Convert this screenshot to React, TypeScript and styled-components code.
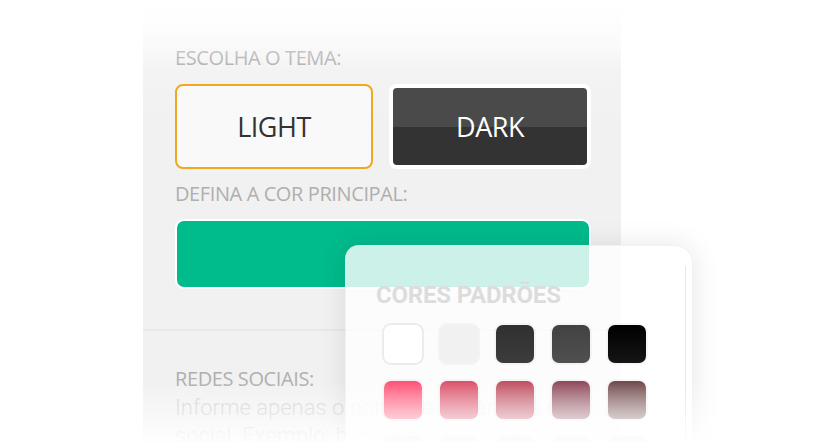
import React from 'react'
import styled, { createGlobalStyle } from 'styled-components'

const GlobalStyle = createGlobalStyle`
  html, body {
    margin: 0;
    padding: 0;
    background: #ffffff;
    overflow: hidden;
  }
  body {
    width: 828px;
    height: 442px;
    font-family: 'Open Sans', 'Liberation Sans', sans-serif;
  }
`

const Page = styled.div`
  position: relative;
  width: 828px;
  height: 442px;
  padding: 10px 0 0 143px;
  box-sizing: border-box;
  overflow: hidden;
`

const Panel = styled.div`
  width: 478px;
  height: 460px;
  background: linear-gradient(#fbfbfb 0px, #f3f3f3 60px, #f1f1f1 120px);
  border-top: 1px solid #f4f4f4;
`

const Section = styled.div<{ $top: number; $bottom: number }>`
  padding: ${p => p.$top}px 30px ${p => p.$bottom}px 32px;
`

const Label = styled.div`
  font-size: 20px;
  font-weight: 400;
  color: #afafaf;
  text-transform: uppercase;
  line-height: 22px;
  letter-spacing: -0.4px;
`

const ThemeRow = styled.div`
  display: flex;
  gap: 16px;
  margin: 15px 0 14px;
`

const ThemeButton = styled.div<{ $dark?: boolean; $active?: boolean }>`
  flex: 1;
  height: 85px;
  box-sizing: border-box;
  border-radius: 8px;
  display: flex;
  align-items: center;
  justify-content: center;
  font-size: 27px;
  letter-spacing: -0.5px;
  color: ${p => (p.$dark ? '#ffffff' : '#333333')};
  border: ${p => (p.$active ? '2px solid #f0a81e' : '4px solid #ffffff')};
  background: ${p =>
    p.$dark
      ? 'linear-gradient(#4a4a4a 0%, #4a4a4a 51%, #333333 51%, #333333 100%)'
      : '#f9f9f9'};
`

const ColorBar = styled.div<{ $color: string }>`
  height: 70px;
  margin-top: 14px;
  box-sizing: border-box;
  border: 2px solid #ffffff;
  border-radius: 9px;
  background: ${p => p.$color};
`

const Divider = styled.div`
  height: 2px;
  background: #e7e7e7;
`

const Hint = styled.div`
  font-family: Roboto, 'Liberation Sans', sans-serif;
  font-weight: 300;
  font-size: 22px;
  line-height: 28px;
  color: #cfcfcf;
  margin-top: 4px;
`

const Popup = styled.div`
  position: absolute;
  left: 345px;
  top: 245px;
  width: 348px;
  height: 240px;
  box-sizing: border-box;
  padding: 35px 30px 0 30px;
  border-radius: 14px 18px 0 0;
  background: rgba(255, 255, 255, 0.8);
  box-shadow: 0 0 28px rgba(0, 0, 0, 0.1);
  border: 1px solid rgba(235, 235, 235, 0.7);
`

const Track = styled.div`
  position: absolute;
  right: 6px;
  top: 20px;
  bottom: 0;
  width: 1px;
  background: #e6e6e6;
`

const PopupTitle = styled.div`
  font-family: Roboto, 'Liberation Sans', sans-serif;
  font-weight: 700;
  font-size: 24px;
  color: #dcdcdc;
  line-height: 28px;
  letter-spacing: -0.2px;
`

const Grid = styled.div`
  display: grid;
  grid-template-columns: repeat(5, 42px);
  gap: 14px;
  margin: 14px 0 0 6px;
`

const Swatch = styled.div<{ $bg: string; $ring?: string }>`
  width: 42px;
  height: 42px;
  box-sizing: border-box;
  border-radius: 9px;
  border: 2px solid ${p => p.$ring || 'rgba(0, 0, 0, 0.03)'};
  background: ${p => p.$bg};
  background-clip: padding-box;
`

const Fade = styled.div`
  position: absolute;
  inset: 0;
  pointer-events: none;
  background: linear-gradient(
    rgba(255, 255, 255, 1) 0px,
    rgba(255, 255, 255, 0.85) 12px,
    rgba(255, 255, 255, 0) 70px,
    rgba(255, 255, 255, 0) 380px,
    rgba(255, 255, 255, 0.55) 418px,
    rgba(255, 255, 255, 0.93) 442px
  );
`

const g = (a: string, b: string) => `linear-gradient(${a}, ${b})`

const swatches: { bg: string; ring?: string }[] = [
  { bg: '#ffffff', ring: '#ececec' },
  { bg: '#f1f1f1', ring: '#f3f3f3' },
  { bg: g('#303030', '#3c3c3c') },
  { bg: g('#424242', '#505050') },
  { bg: g('#000000', '#151515') },
  { bg: g('#ff4d72', '#ff8aa2') },
  { bg: g('#db4d66', '#e68a9c') },
  { bg: g('#bd4b5d', '#d88a98') },
  { bg: g('#8c4455', '#b48a92') },
  { bg: g('#6c4446', '#a48a8a') },
  { bg: g('#cfe0ff', '#dfe9ff') },
  { bg: g('#d5e0f8', '#e3e9f8') },
  { bg: g('#d8deec', '#e4e8f0') },
  { bg: g('#dcdfe6', '#e6e8ec') },
  { bg: g('#dedfe2', '#e8e8ea') },
]

export default function App() {
  return (
    <>
      <GlobalStyle />
      <Page>
        <Panel>
          <Section $top={36} $bottom={40}>
            <Label>Escolha o tema:</Label>
            <ThemeRow>
              <ThemeButton $active>LIGHT</ThemeButton>
              <ThemeButton $dark>DARK</ThemeButton>
            </ThemeRow>
            <Label>Defina a cor principal:</Label>
            <ColorBar $color="#00bb8c" />
          </Section>
          <Divider />
          <Section $top={37} $bottom={0}>
            <Label>Redes sociais:</Label>
            <Hint>
              Informe apenas o nome de usuário da rede social. Exemplo: henrique
            </Hint>
          </Section>
        </Panel>
        <Popup>
          <Track />
          <PopupTitle>CORES PADRÕES</PopupTitle>
          <Grid>
            {swatches.map((s, i) => (
              <Swatch key={i} $bg={s.bg} $ring={s.ring} />
            ))}
          </Grid>
        </Popup>
        <Fade />
      </Page>
    </>
  )
}
